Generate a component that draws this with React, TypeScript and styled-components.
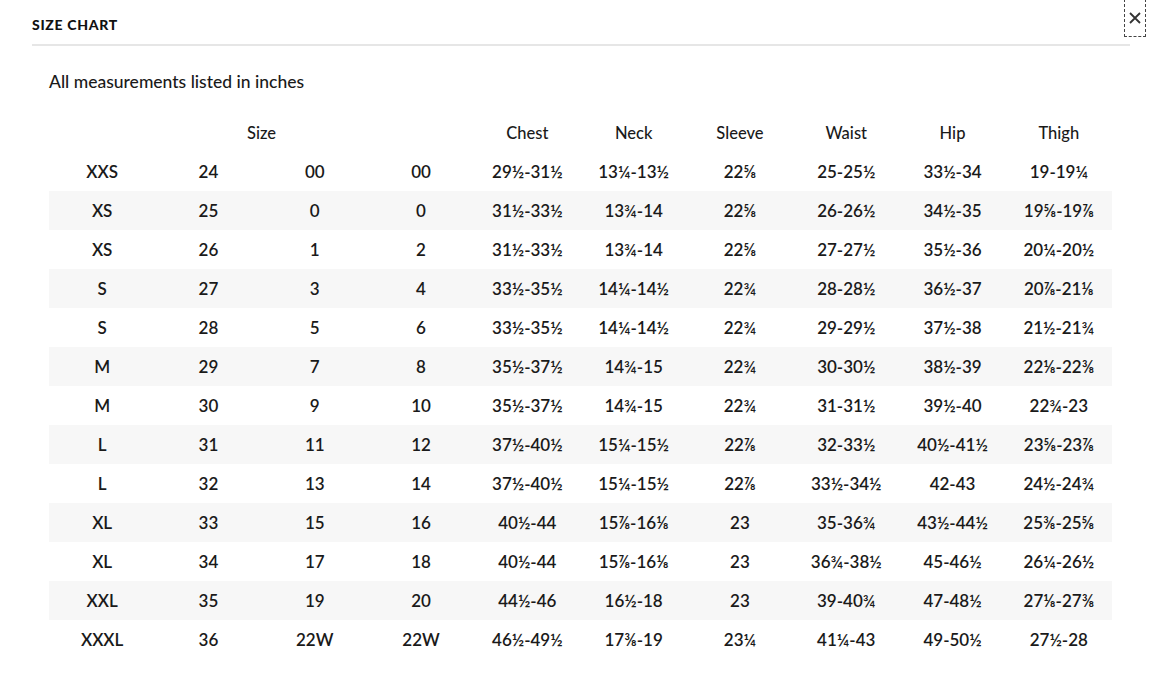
import React from "react";
import styled, { createGlobalStyle } from "styled-components";

const Global = createGlobalStyle`
  html, body { margin: 0; padding: 0; background: #ffffff; }
  body { font-family: "Lato", "Noto Sans", sans-serif; color: #1a1a1a; }
`;

const Page = styled.div`
  position: relative;
  width: 1163px;
  height: 700px;
  overflow: hidden;
`;

const Header = styled.div`
  display: flex;
  align-items: center;
  margin: 0 33px 0 32px;
  height: 44px;
  border-bottom: 2px solid #e6e6e6;
`;

const Title = styled.h2`
  margin: 0;
  padding-top: 4px;
  font-size: 14px;
  font-weight: 900;
  letter-spacing: 0.7px;
  text-transform: uppercase;
  color: #111;
`;

const Close = styled.button`
  position: absolute;
  top: -1px;
  right: 17px;
  width: 22px;
  height: 38px;
  padding: 0;
  background: transparent;
  border: 1px dashed #444;
  display: flex;
  align-items: center;
  justify-content: center;
  color: #333;
  cursor: pointer;
`;

const Body = styled.div`
  padding: 25px 0 0 49px;
`;

const Intro = styled.p`
  margin: 0 0 21px 0;
  font-size: 17.5px;
  font-weight: 500;
  color: #1a1a1a;
`;

const Table = styled.table`
  width: 1063px;
  border-collapse: collapse;
  table-layout: fixed;
`;

const Row = styled.tr<{ $striped?: boolean }>`
  height: 39px;
  background: ${(p) => (p.$striped ? "#f7f7f7" : "transparent")};
`;

const Th = styled.th`
  font-size: 16.5px;
  font-weight: 500;
  text-align: center;
  color: #1a1a1a;
  padding: 0;
`;

const Td = styled.td`
  font-size: 17px;
  font-weight: 600;
  text-align: center;
  color: #1a1a1a;
  padding: 0;
  white-space: nowrap;
`;

const rows: string[][] = [
  ["XXS", "24", "00", "00", "29½-31½", "13¼-13½", "22⅝", "25-25½", "33½-34", "19-19¼"],
  ["XS", "25", "0", "0", "31½-33½", "13¾-14", "22⅝", "26-26½", "34½-35", "19⅝-19⅞"],
  ["XS", "26", "1", "2", "31½-33½", "13¾-14", "22⅝", "27-27½", "35½-36", "20¼-20½"],
  ["S", "27", "3", "4", "33½-35½", "14¼-14½", "22¾", "28-28½", "36½-37", "20⅞-21⅛"],
  ["S", "28", "5", "6", "33½-35½", "14¼-14½", "22¾", "29-29½", "37½-38", "21½-21¾"],
  ["M", "29", "7", "8", "35½-37½", "14¾-15", "22¾", "30-30½", "38½-39", "22⅛-22⅜"],
  ["M", "30", "9", "10", "35½-37½", "14¾-15", "22¾", "31-31½", "39½-40", "22¾-23"],
  ["L", "31", "11", "12", "37½-40½", "15¼-15½", "22⅞", "32-33½", "40½-41½", "23⅝-23⅞"],
  ["L", "32", "13", "14", "37½-40½", "15¼-15½", "22⅞", "33½-34½", "42-43", "24½-24¾"],
  ["XL", "33", "15", "16", "40½-44", "15⅞-16⅛", "23", "35-36¾", "43½-44½", "25⅜-25⅝"],
  ["XL", "34", "17", "18", "40½-44", "15⅞-16⅛", "23", "36¾-38½", "45-46½", "26¼-26½"],
  ["XXL", "35", "19", "20", "44½-46", "16½-18", "23", "39-40¾", "47-48½", "27⅛-27⅜"],
  ["XXXL", "36", "22W", "22W", "46½-49½", "17⅜-19", "23¼", "41¼-43", "49-50½", "27½-28"],
];

const measures = ["Chest", "Neck", "Sleeve", "Waist", "Hip", "Thigh"];

export default function App() {
  return (
    <Page>
      <Global />
      <Header>
        <Title>Size Chart</Title>
      </Header>
      <Close aria-label="Close">
        <svg width="14" height="14" viewBox="0 0 14 14">
          <path d="M2 2 L12 12 M12 2 L2 12" stroke="#333" strokeWidth="1.8" />
        </svg>
      </Close>
      <Body>
        <Intro>All measurements listed in inches</Intro>
        <Table>
          <thead>
            <Row>
              <Th />
              <Th colSpan={2}>Size</Th>
              <Th />
              {measures.map((m) => (
                <Th key={m}>{m}</Th>
              ))}
            </Row>
          </thead>
          <tbody>
            {rows.map((r, i) => (
              <Row key={i} $striped={i % 2 === 1}>
                {r.map((c, j) => (
                  <Td key={j}>{c}</Td>
                ))}
              </Row>
            ))}
          </tbody>
        </Table>
      </Body>
    </Page>
  );
}
